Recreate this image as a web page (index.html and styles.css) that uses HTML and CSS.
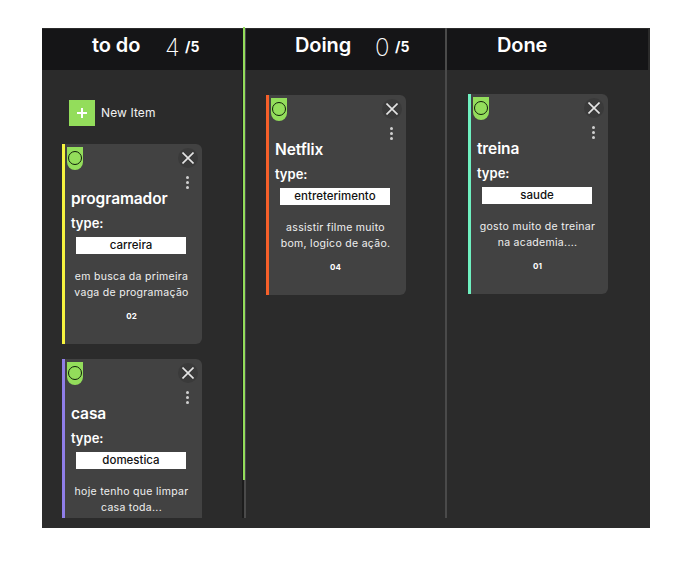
FILE: index.html
```html
<!DOCTYPE html>
<html lang="pt">
<head>
    <meta charset="UTF-8">
    <title>Kanban</title>
    <link rel="stylesheet" href="styles.css">
</head>
<body>
    <div class="board">
        <div class="scroll-thumb"></div>

        <!-- to do -->
        <div class="column column-todo">
            <div class="column-header">
                <h2 class="column-title title-todo">to do</h2>
                <span class="count">4</span>
                <span class="limit">/5</span>
            </div>
            <div class="column-body">
                <button class="new-item">
                    <span class="new-item-icon">
                        <svg width="12" height="12" viewBox="0 0 12 12"><path d="M6 1v10M1 6h10" stroke="#fff" stroke-width="2"/></svg>
                    </span>
                    New Item
                </button>
                <div class="card card-yellow">
                    <span class="tag"><span class="tag-dot"></span></span>
                    <span class="close">
                        <svg width="12" height="12" viewBox="0 0 12 12"><path d="M0.5 0.5l11 11M11.5 0.5l-11 11" stroke="#e4e4e4" stroke-width="1.6"/></svg>
                    </span>
                    <span class="menu"><i></i><i></i><i></i></span>
                    <h3 class="card-title">programador</h3>
                    <p class="card-label">type:</p>
                    <div class="card-type">carreira</div>
                    <p class="card-text">em busca da primeira<br>vaga de programação</p>
                    <p class="card-number">02</p>
                </div>
                <div class="card card-purple">
                    <span class="tag"><span class="tag-dot"></span></span>
                    <span class="close">
                        <svg width="12" height="12" viewBox="0 0 12 12"><path d="M0.5 0.5l11 11M11.5 0.5l-11 11" stroke="#e4e4e4" stroke-width="1.6"/></svg>
                    </span>
                    <span class="menu"><i></i><i></i><i></i></span>
                    <h3 class="card-title">casa</h3>
                    <p class="card-label">type:</p>
                    <div class="card-type">domestica</div>
                    <p class="card-text">hoje tenho que limpar<br>casa toda...</p>
                </div>
            </div>
        </div>

        <!-- doing -->
        <div class="column column-doing">
            <div class="column-header">
                <h2 class="column-title title-doing">Doing</h2>
                <span class="count">0</span>
                <span class="limit">/5</span>
            </div>
            <div class="column-body">
                <div class="card card-orange">
                    <span class="tag"><span class="tag-dot"></span></span>
                    <span class="close">
                        <svg width="12" height="12" viewBox="0 0 12 12"><path d="M0.5 0.5l11 11M11.5 0.5l-11 11" stroke="#e4e4e4" stroke-width="1.6"/></svg>
                    </span>
                    <span class="menu"><i></i><i></i><i></i></span>
                    <h3 class="card-title">Netflix</h3>
                    <p class="card-label">type:</p>
                    <div class="card-type">entreterimento</div>
                    <p class="card-text">assistir filme muito<br>bom, logico de ação.</p>
                    <p class="card-number">04</p>
                </div>
            </div>
        </div>

        <!-- done -->
        <div class="column column-done">
            <div class="column-header">
                <h2 class="column-title title-done">Done</h2>
            </div>
            <div class="column-body">
                <div class="card card-green">
                    <span class="tag"><span class="tag-dot"></span></span>
                    <span class="close">
                        <svg width="12" height="12" viewBox="0 0 12 12"><path d="M0.5 0.5l11 11M11.5 0.5l-11 11" stroke="#e4e4e4" stroke-width="1.6"/></svg>
                    </span>
                    <span class="menu"><i></i><i></i><i></i></span>
                    <h3 class="card-title">treina</h3>
                    <p class="card-label">type:</p>
                    <div class="card-type">saude</div>
                    <p class="card-text">gosto muito de treinar<br>na academia....</p>
                    <p class="card-number">01</p>
                </div>
            </div>
        </div>
    </div>
</body>
</html>
```

FILE: styles.css
```css
/* layout */
body {
    margin: 0;
    background: #fff;
    font-family: 'Inter', 'Liberation Sans', sans-serif;
    color: #fff;
}

.board {
    position: relative;
    display: flex;
    width: 608px;
    height: 500px;
    margin: 28px 0 0 42px;
    padding-bottom: 10px;
    box-sizing: border-box;
    background: #2b2b2b;
}

/* green scroll bar on the first column */
.scroll-thumb {
    position: absolute;
    top: -1px;
    left: 201px;
    width: 2px;
    height: 453px;
    background: #93dd5b;
}

/* columns */
.column {
    display: flex;
    flex-direction: column;
    overflow: hidden;
    box-sizing: border-box;
}

.column-todo {
    width: 204px;
    border-right: 2px solid #4a4a4a;
}

.column-doing {
    width: 201px;
    border-right: 2px solid #4a4a4a;
}

.column-done {
    width: 203px;
}

.column-header {
    display: flex;
    align-items: center;
    flex: none;
    height: 42px;
    box-sizing: border-box;
    border-top: 1px solid #2b2b2b;
    background: #151517;
}

.column-done .column-header {
    border-right: 2px solid #2b2b2b;
}

.column-title {
    margin: 0 0 9px;
    font-size: 20px;
    font-weight: 600;
    line-height: 32px;
    letter-spacing: -0.1px;
}

.title-todo {
    margin-left: 50px;
    width: 73px;
}

.title-doing {
    margin-left: 49px;
    width: 80px;
}

.title-done {
    margin-left: 50px;
}

.count {
    width: 20px;
    margin-bottom: 4px;
    font-size: 24px;
    font-weight: 200;
}

.limit {
    margin-bottom: 7px;
    font-size: 14px;
    font-weight: 700;
}

.column-body {
    flex: 1;
    min-height: 0;
    padding: 25px 0 0 20px;
}

.column-todo .column-body {
    border-right: 2px solid #1c1c1c;
}

.column-done .column-body {
    padding: 24px 0 0 21px;
}

/* new item */
.new-item {
    display: flex;
    align-items: center;
    gap: 6px;
    margin: 5px 0 18px 7px;
    padding: 0 0 2px;
    border: none;
    background: none;
    color: #f2f2f2;
    font-family: inherit;
    font-size: 12px;
    letter-spacing: 0.1px;
    cursor: pointer;
}

.new-item-icon {
    display: flex;
    align-items: center;
    justify-content: center;
    width: 26px;
    height: 26px;
    margin-bottom: -2px;
    background: #93dd5b;
}

/* card */
.card {
    position: relative;
    flex: none;
    width: 140px;
    height: 200px;
    margin-bottom: 15px;
    padding-top: 45px;
    box-sizing: border-box;
    border-left: 3px solid #fff;
    border-radius: 0 6px 6px 0;
    background: #424242;
    text-align: center;
}

.card-yellow {
    border-left-color: #f6f33f;
}

.card-purple {
    border-left-color: #8f7ee8;
}

.card-orange {
    border-left-color: #f6602a;
}

.card-green {
    border-left-color: #6ff0c0;
}

.tag {
    position: absolute;
    top: 3px;
    left: 2px;
    width: 16px;
    height: 23px;
    border-radius: 0 0 8px 8px;
    background: #93dd5b;
}

.tag-dot {
    display: block;
    width: 12px;
    height: 12px;
    margin: 4px 0 0 1px;
    border: 1px solid #10200a;
    border-radius: 50%;
}

.close {
    position: absolute;
    top: 4px;
    right: 4px;
    display: flex;
    align-items: center;
    justify-content: center;
    width: 20px;
    height: 20px;
    border-radius: 50%;
    background: #3a3a3a;
}

.menu {
    position: absolute;
    top: 32px;
    right: 13px;
    display: flex;
    flex-direction: column;
    gap: 2px;
}

.menu i {
    width: 3px;
    height: 3px;
    border-radius: 50%;
    background: #d0d0d0;
}

.card-title {
    margin: 0 0 0 6px;
    font-size: 15.5px;
    font-weight: 600;
    line-height: 20px;
    text-align: left;
    letter-spacing: -0.1px;
}

.card-label {
    margin: 4px 0 0 6px;
    font-size: 13px;
    font-weight: 600;
    line-height: 20px;
    text-align: left;
}

.card-type {
    width: 110px;
    height: 17px;
    margin: 4px 0 0 11px;
    background: #fff;
    color: #111;
    font-size: 11.5px;
    font-weight: 500;
    line-height: 17px;
}

.card-text {
    margin: 15px 0 0;
    padding-right: 4px;
    color: #f0f0f0;
    font-size: 10.5px;
    line-height: 16px;
    letter-spacing: 0.3px;
}

.card-number {
    margin: 10px 0 0;
    padding-right: 4px;
    font-size: 8px;
    font-weight: 700;
    line-height: 10px;
}
```
